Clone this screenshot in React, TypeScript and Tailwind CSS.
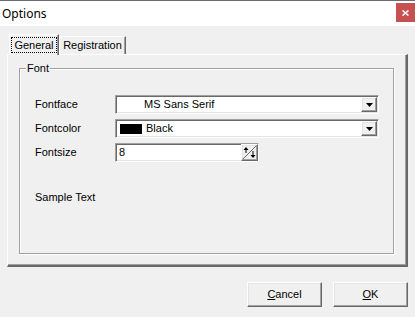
import React from 'react';

const sunken =
  'border border-t-[#a0a0a0] border-l-[#a0a0a0] border-b-white border-r-white shadow-[inset_1px_1px_0_#696969,inset_-1px_-1px_0_#e3e3e3] bg-white';
const raised =
  'border border-t-white border-l-white border-r-[#696969] border-b-[#696969] shadow-[inset_-1px_-1px_0_#a0a0a0,inset_1px_1px_0_#e3e3e3] bg-[#f0f0f0]';

const DropButton: React.FC = () => (
  <div className={`${raised} w-[16px] h-[15px] flex items-center justify-center mr-[1px]`}>
    <svg width="7" height="4" viewBox="0 0 7 4">
      <path d="M0 0h7L3.5 4z" fill="#000" />
    </svg>
  </div>
);

const SpinButton: React.FC = () => (
  <div className={`${raised} w-[17px] h-[17px] relative`}>
    <svg width="15" height="15" viewBox="0 0 15 15" className="absolute left-0 top-0">
      <line x1="1" y1="14" x2="14" y2="1" stroke="#696969" strokeWidth="1" />
      <path d="M4 2L1.5 5h5z" fill="#000" />
      <rect x="3.5" y="4" width="1" height="4" fill="#000" />
      <path d="M11 13L8.5 10h5z" fill="#000" />
      <rect x="10.5" y="6" width="1" height="4.5" fill="#000" />
    </svg>
  </div>
);

const Row: React.FC<{ label: string; children: React.ReactNode }> = ({ label, children }) => (
  <div className="flex items-center h-[19px]">
    <span className="w-[80px] shrink-0">{label}</span>
    {children}
  </div>
);

const App: React.FC = () => {
  return (
    <div
      className="w-[415px] h-[317px] bg-[#f0f0f0] flex flex-col text-[11px] text-black overflow-hidden"
      style={{ fontFamily: '"Liberation Sans", Arial, sans-serif' }}
    >
      {/* title bar */}
      <div className="h-[26px] bg-white border-t border-[#6d6d6d] flex justify-between shrink-0">
        <span
          className="pl-[2px] pt-[4px] text-[12px] text-[#000]"
          style={{ fontFamily: '"Noto Sans", "Open Sans", sans-serif' }}
        >
          Options
        </span>
        <div className="mt-[2px] w-[19px] h-[19px] bg-[#c75050] flex items-center justify-center">
          <svg width="7" height="6" viewBox="0 0 7 6">
            <path d="M0.5 0.5L6.5 5.5M6.5 0.5L0.5 5.5" stroke="#fff" strokeWidth="1.6" />
          </svg>
        </div>
      </div>

      <div className="px-[7px] pt-[7px] flex flex-col">
        {/* tabs */}
        <div className="flex items-end h-[21px] pl-[2px]">
          <div className="h-[21px] w-[50px] border-t border-l border-white border-r border-r-[#696969] shadow-[inset_-1px_0_0_#a0a0a0] bg-[#f0f0f0] relative z-10 -mb-[1px] pt-[2px] px-[1px]">
            <div className="border border-dotted border-black h-[16px] flex items-center justify-center">
              General
            </div>
          </div>
          <div className="h-[18px] w-[67px] border-t border-l border-white border-r border-r-[#696969] shadow-[inset_-1px_0_0_#a0a0a0] flex items-center justify-center">
            Registration
          </div>
        </div>

        {/* panel */}
        <div className="h-[213px] border-t border-l border-white border-r-2 border-b-2 border-r-[#696969] border-b-[#696969] shadow-[inset_-1px_-1px_0_#a0a0a0] pt-[13px] pl-[11px] pr-[12px] pb-[11px] flex">
          <div className="flex-1 border border-[#a0a0a0] shadow-[1px_1px_0_#fff,inset_1px_1px_0_#fff] relative flex flex-col pl-[15px] pt-[26px] pr-[14px]">
            <span className="absolute left-[6px] -top-[7px] bg-[#f0f0f0] px-[1px] leading-[13px]">Font</span>
            <div className="flex flex-col gap-[5px]">
              <Row label="Fontface">
                <div className={`${sunken} flex-1 h-[19px] flex items-center justify-between pl-[28px]`}>
                  <span>MS Sans Serif</span>
                  <DropButton />
                </div>
              </Row>
              <Row label="Fontcolor">
                <div className={`${sunken} flex-1 h-[19px] flex items-center justify-between pl-[4px]`}>
                  <div className="flex items-center gap-[4px]">
                    <div className="w-[22px] h-[10px] bg-black" />
                    <span>Black</span>
                  </div>
                  <DropButton />
                </div>
              </Row>
              <Row label="Fontsize">
                <div className={`${sunken} w-[144px] h-[19px] flex items-center justify-between pl-[3px]`}>
                  <span>8</span>
                  <SpinButton />
                </div>
              </Row>
            </div>
            <div className="mt-[27px]">Sample Text</div>
          </div>
        </div>

        {/* buttons */}
        <div className="flex justify-end gap-[11px] mt-[15px]">
          <button className={`${raised} w-[75px] h-[25px] flex items-center justify-center`}>
            <span>
              <span className="underline">C</span>ancel
            </span>
          </button>
          <button className={`${raised} w-[75px] h-[25px] flex items-center justify-center`}>
            <span>
              <span className="underline">O</span>K
            </span>
          </button>
        </div>
      </div>
    </div>
  );
};

export default App;
